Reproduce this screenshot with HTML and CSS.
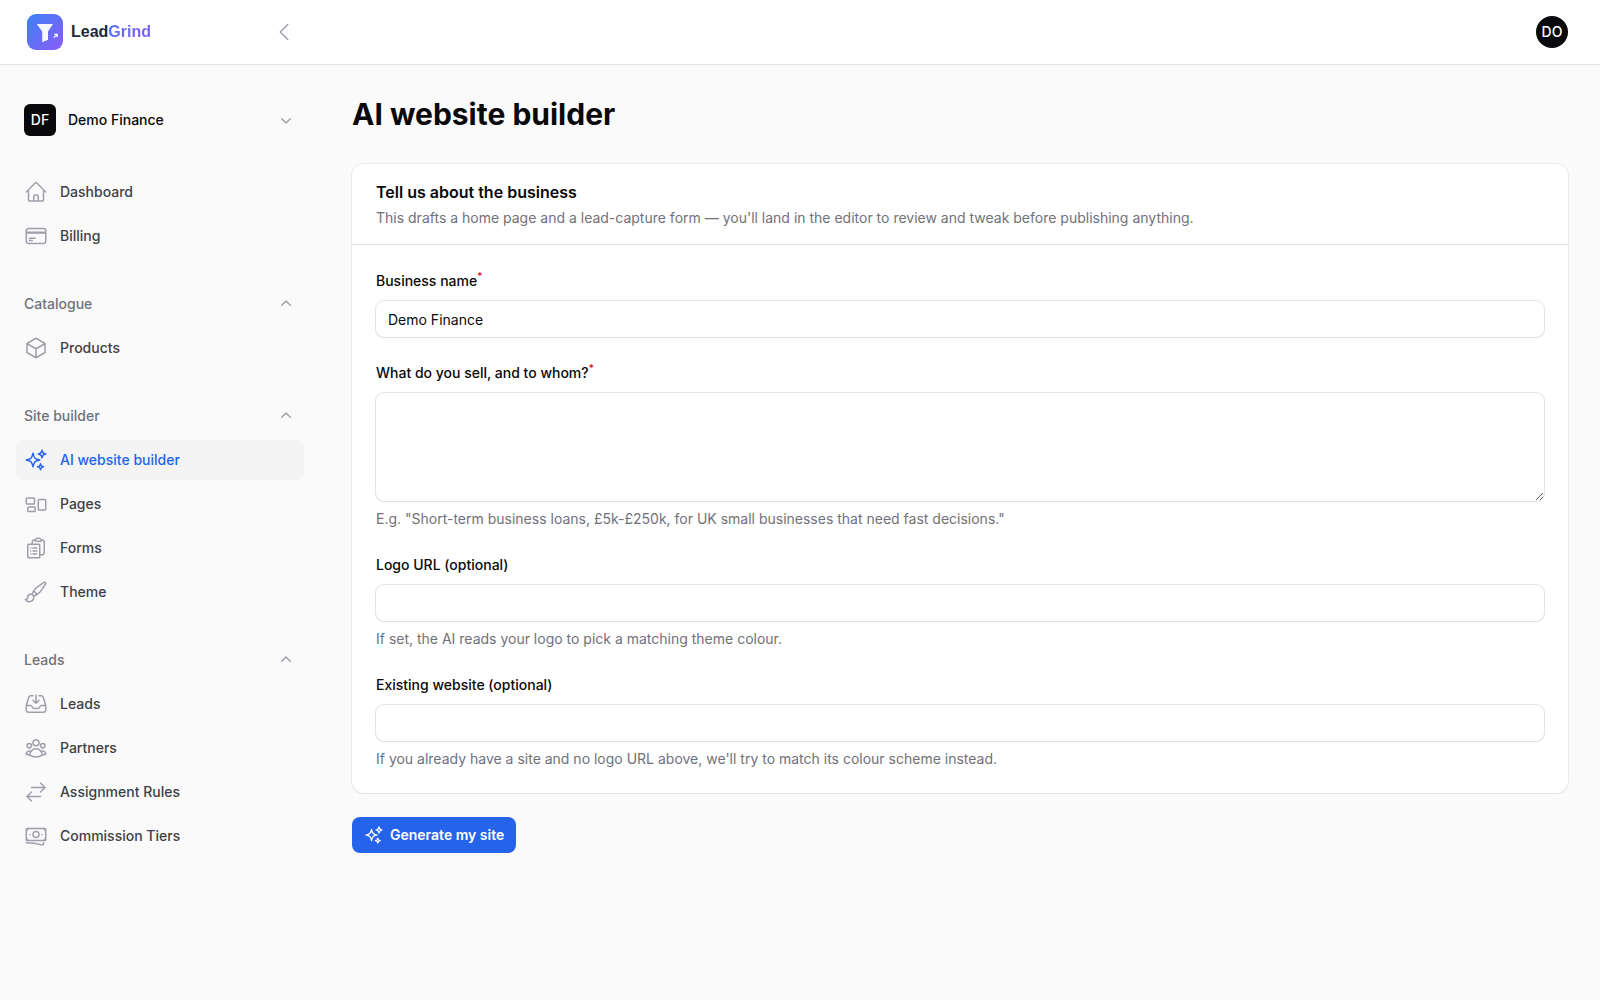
FILE: index.html
```html
<!DOCTYPE html>
<html lang="en">
<head>
    <meta charset="UTF-8">
    <meta name="viewport" content="width=device-width, initial-scale=1.0">
    <title>AI website builder - LeadGrind</title>
    <link rel="stylesheet" href="styles.css">
</head>
<body>
    <!-- Icon sprite -->
    <svg class="sprite" aria-hidden="true">
        <symbol id="home" viewBox="0 0 24 24"><path d="m2.25 12 8.954-8.955c.44-.439 1.152-.439 1.591 0L21.75 12M4.5 9.75v10.125c0 .621.504 1.125 1.125 1.125H9.75v-4.875c0-.621.504-1.125 1.125-1.125h2.25c.621 0 1.125.504 1.125 1.125V21h4.125c.621 0 1.125-.504 1.125-1.125V9.75M8.25 21h8.25"/></symbol>
        <symbol id="card" viewBox="0 0 24 24"><path d="M2.25 8.25h19.5M2.25 9h19.5m-16.5 5.25h6m-6 2.25h3m-3.75 3h15a2.25 2.25 0 0 0 2.25-2.25V6.75A2.25 2.25 0 0 0 19.5 4.5h-15a2.25 2.25 0 0 0-2.25 2.25v10.5A2.25 2.25 0 0 0 4.5 19.5Z"/></symbol>
        <symbol id="cube" viewBox="0 0 24 24"><path d="m21 7.5-9-5.25L3 7.5m18 0-9 5.25m9-5.25v9l-9 5.25M3 7.5l9 5.25M3 7.5v9l9 5.25m0-9v9"/></symbol>
        <symbol id="sparkles" viewBox="0 0 24 24"><path d="M9.813 15.904 9 18.75l-.813-2.846a4.5 4.5 0 0 0-3.09-3.09L2.25 12l2.846-.813a4.5 4.5 0 0 0 3.09-3.09L9 5.25l.813 2.846a4.5 4.5 0 0 0 3.09 3.09L15.75 12l-2.846.813a4.5 4.5 0 0 0-3.09 3.09ZM18.259 8.715 18 9.75l-.259-1.035a3.375 3.375 0 0 0-2.455-2.456L14.25 6l1.036-.259a3.375 3.375 0 0 0 2.455-2.456L18 2.25l.259 1.035a3.375 3.375 0 0 0 2.456 2.456L21.75 6l-1.035.259a3.375 3.375 0 0 0-2.456 2.456ZM16.894 20.567 16.5 21.75l-.394-1.183a2.25 2.25 0 0 0-1.423-1.423L13.5 18.75l1.183-.394a2.25 2.25 0 0 0 1.423-1.423l.394-1.183.394 1.183a2.25 2.25 0 0 0 1.423 1.423l1.183.394-1.183.394a2.25 2.25 0 0 0-1.423 1.423Z"/></symbol>
        <symbol id="pages" viewBox="0 0 24 24"><path d="M2.25 7.125C2.25 6.504 2.754 6 3.375 6h6c.621 0 1.125.504 1.125 1.125v3.75c0 .621-.504 1.125-1.125 1.125h-6a1.125 1.125 0 0 1-1.125-1.125v-3.75ZM14.25 8.625c0-.621.504-1.125 1.125-1.125h5.25c.621 0 1.125.504 1.125 1.125v8.25c0 .621-.504 1.125-1.125 1.125h-5.25a1.125 1.125 0 0 1-1.125-1.125v-8.25ZM3.75 16.125c0-.621.504-1.125 1.125-1.125h5.25c.621 0 1.125.504 1.125 1.125v2.25c0 .621-.504 1.125-1.125 1.125h-5.25a1.125 1.125 0 0 1-1.125-1.125v-2.25Z"/></symbol>
        <symbol id="forms" viewBox="0 0 24 24"><path d="M9 12h3.75M9 15h3.75M9 18h3.75m3 .75H18a2.25 2.25 0 0 0 2.25-2.25V6.108c0-1.135-.845-2.098-1.976-2.192a48.424 48.424 0 0 0-1.123-.08m-5.801 0c-.065.21-.1.433-.1.664 0 .414.336.75.75.75h4.5a.75.75 0 0 0 .75-.75 2.25 2.25 0 0 0-.1-.664m-5.8 0A2.251 2.251 0 0 1 13.5 2.25H15c1.012 0 1.867.668 2.15 1.586m-5.8 0c-.376.023-.75.05-1.124.08C9.095 4.01 8.25 4.973 8.25 6.108V8.25m0 0H4.875c-.621 0-1.125.504-1.125 1.125v11.25c0 .621.504 1.125 1.125 1.125h9.75c.621 0 1.125-.504 1.125-1.125V9.375c0-.621-.504-1.125-1.125-1.125H8.25ZM6.75 12h.008v.008H6.75V12Zm0 3h.008v.008H6.75V15Zm0 3h.008v.008H6.75V18Z"/></symbol>
        <symbol id="brush" viewBox="0 0 24 24"><path d="M9.53 16.122a3 3 0 0 0-5.78 1.128 2.25 2.25 0 0 1-2.4 2.245 4.5 4.5 0 0 0 8.4-2.245c0-.399-.078-.78-.22-1.128Zm0 0a15.998 15.998 0 0 0 3.388-1.62m-5.043-.025a15.994 15.994 0 0 1 1.622-3.395m3.42 3.42a15.995 15.995 0 0 0 4.764-4.648l3.876-5.814a1.151 1.151 0 0 0-1.597-1.597L14.146 6.32a15.996 15.996 0 0 0-4.649 4.763m3.42 3.42a6.776 6.776 0 0 0-3.42-3.42"/></symbol>
        <symbol id="inbox" viewBox="0 0 24 24"><path d="M9 3.75H6.912a2.25 2.25 0 0 0-2.15 1.588L2.35 13.177a2.25 2.25 0 0 0-.1.661V18a2.25 2.25 0 0 0 2.25 2.25h15A2.25 2.25 0 0 0 21.75 18v-4.162c0-.224-.034-.447-.1-.661L19.24 5.338a2.25 2.25 0 0 0-2.15-1.588H15M2.25 13.5h3.86a2.25 2.25 0 0 1 2.012 1.244l.256.512a2.25 2.25 0 0 0 2.013 1.244h3.218a2.25 2.25 0 0 0 2.013-1.244l.256-.512a2.25 2.25 0 0 1 2.013-1.244h3.859M12 3v8.25m0 0-3-3m3 3 3-3"/></symbol>
        <symbol id="group" viewBox="0 0 24 24"><path d="M18 18.72a9.094 9.094 0 0 0 3.741-.479 3 3 0 0 0-4.682-2.72m.94 3.198.001.031c0 .225-.012.447-.037.666A11.944 11.944 0 0 1 12 21c-2.17 0-4.207-.576-5.963-1.584A6.062 6.062 0 0 1 6 18.719m12 0a5.971 5.971 0 0 0-.941-3.197m0 0A5.995 5.995 0 0 0 12 12.75a5.995 5.995 0 0 0-5.058 2.772m0 0a3 3 0 0 0-4.681 2.72 8.986 8.986 0 0 0 3.74.477m.94-3.197a5.971 5.971 0 0 0-.94 3.197M15 6.75a3 3 0 1 1-6 0 3 3 0 0 1 6 0Zm6 3a2.25 2.25 0 1 1-4.5 0 2.25 2.25 0 0 1 4.5 0Zm-13.5 0a2.25 2.25 0 1 1-4.5 0 2.25 2.25 0 0 1 4.5 0Z"/></symbol>
        <symbol id="arrows" viewBox="0 0 24 24"><path d="M7.5 21 3 16.5m0 0L7.5 12M3 16.5h13.5m0-13.5L21 7.5m0 0L16.5 12M21 7.5H7.5"/></symbol>
        <symbol id="banknotes" viewBox="0 0 24 24"><path d="M2.25 18.75a60.07 60.07 0 0 1 15.797 2.101c.727.198 1.453-.342 1.453-1.096V18.75M3.75 4.5v.75A.75.75 0 0 1 3 6h-.75m0 0v-.375c0-.621.504-1.125 1.125-1.125H20.25M2.25 6v9m18-10.5v.75c0 .414.336.75.75.75h.75m-1.5-1.5h.375c.621 0 1.125.504 1.125 1.125v9.75c0 .621-.504 1.125-1.125 1.125h-.375m1.5-1.5H21a.75.75 0 0 0-.75.75v.75m0 0H3.75m0 0h-.375a1.125 1.125 0 0 1-1.125-1.125V15m1.5 1.5v-.75A.75.75 0 0 0 3 15h-.75M15 10.5a3 3 0 1 1-6 0 3 3 0 0 1 6 0Zm3 0h.008v.008H18V10.5Zm-12 0h.008v.008H6V10.5Z"/></symbol>
        <symbol id="chevron-left" viewBox="0 0 24 24"><path d="M15.75 19.5 8.25 12l7.5-7.5"/></symbol>
        <symbol id="chevron-down" viewBox="0 0 20 20"><path d="M5.22 8.22a.75.75 0 0 1 1.06 0L10 11.94l3.72-3.72a.75.75 0 1 1 1.06 1.06l-4.25 4.25a.75.75 0 0 1-1.06 0L5.22 9.28a.75.75 0 0 1 0-1.06Z"/></symbol>
        <symbol id="chevron-up" viewBox="0 0 20 20"><path d="M9.47 6.47a.75.75 0 0 1 1.06 0l4.25 4.25a.75.75 0 1 1-1.06 1.06L10 8.06l-3.72 3.72a.75.75 0 0 1-1.06-1.06l4.25-4.25Z"/></symbol>
    </svg>

    <header class="topbar">
        <div class="topbar-start">
            <a class="brand" href="#">
                <svg class="brand-mark" viewBox="0 0 36 36" aria-hidden="true">
                    <defs>
                        <linearGradient id="brand-gradient" x1="0" y1="0" x2="1" y2="1">
                            <stop offset="0" stop-color="#3b82f6"/>
                            <stop offset="1" stop-color="#8b5cf6"/>
                        </linearGradient>
                    </defs>
                    <rect width="36" height="36" rx="9" fill="url(#brand-gradient)"/>
                    <path d="M9.700 10h16.300l-5 7.500v8.200l-5.800 2.500V17.500z" fill="#fff" fill-opacity=".95"/>
                    <path d="M26.800 23.700l3.400-3.400M27.200 20.300h3v3" fill="none" stroke="#fff" stroke-width="1.200"/>
                </svg>
                <span class="brand-name">Lead<span class="brand-accent">Grind</span></span>
            </a>
            <button class="icon-button" type="button" aria-label="Collapse sidebar">
                <svg class="icon"><use href="#chevron-left"/></svg>
            </button>
        </div>
        <button class="avatar avatar-round" type="button" aria-label="User menu">DO</button>
    </header>

    <div class="layout">
        <aside class="sidebar">
            <button class="tenant" type="button">
                <span class="avatar">DF</span>
                <span class="tenant-name">Demo Finance</span>
                <svg class="icon-small"><use href="#chevron-down"/></svg>
            </button>

            <nav class="nav">
                <ul class="nav-items">
                    <li><a class="nav-item" href="#"><svg class="icon"><use href="#home"/></svg>Dashboard</a></li>
                    <li><a class="nav-item" href="#"><svg class="icon"><use href="#card"/></svg>Billing</a></li>
                </ul>

                <div class="nav-group">
                    <button class="nav-label" type="button">Catalogue<svg class="icon-small"><use href="#chevron-up"/></svg></button>
                    <ul class="nav-items">
                        <li><a class="nav-item" href="#"><svg class="icon"><use href="#cube"/></svg>Products</a></li>
                    </ul>
                </div>

                <div class="nav-group">
                    <button class="nav-label" type="button">Site builder<svg class="icon-small"><use href="#chevron-up"/></svg></button>
                    <ul class="nav-items">
                        <li><a class="nav-item active" href="#" aria-current="page"><svg class="icon"><use href="#sparkles"/></svg>AI website builder</a></li>
                        <li><a class="nav-item" href="#"><svg class="icon"><use href="#pages"/></svg>Pages</a></li>
                        <li><a class="nav-item" href="#"><svg class="icon"><use href="#forms"/></svg>Forms</a></li>
                        <li><a class="nav-item" href="#"><svg class="icon"><use href="#brush"/></svg>Theme</a></li>
                    </ul>
                </div>

                <div class="nav-group">
                    <button class="nav-label" type="button">Leads<svg class="icon-small"><use href="#chevron-up"/></svg></button>
                    <ul class="nav-items">
                        <li><a class="nav-item" href="#"><svg class="icon"><use href="#inbox"/></svg>Leads</a></li>
                        <li><a class="nav-item" href="#"><svg class="icon"><use href="#group"/></svg>Partners</a></li>
                        <li><a class="nav-item" href="#"><svg class="icon"><use href="#arrows"/></svg>Assignment Rules</a></li>
                        <li><a class="nav-item" href="#"><svg class="icon"><use href="#banknotes"/></svg>Commission Tiers</a></li>
                    </ul>
                </div>
            </nav>
        </aside>

        <main class="main">
            <h1>AI website builder</h1>

            <form class="form">
                <section class="card">
                    <header class="card-header">
                        <h2>Tell us about the business</h2>
                        <p>This drafts a home page and a lead-capture form — you'll land in the editor to review and tweak before publishing anything.</p>
                    </header>
                    <div class="card-body">
                        <div class="field">
                            <label for="businessName">Business name<sup>*</sup></label>
                            <input type="text" id="businessName" value="Demo Finance" required>
                        </div>
                        <div class="field">
                            <label for="description">What do you sell, and to whom?<sup>*</sup></label>
                            <textarea id="description" rows="4" required></textarea>
                            <p class="hint">E.g. "Short-term business loans, £5k-£250k, for UK small businesses that need fast decisions."</p>
                        </div>
                        <div class="field">
                            <label for="logoUrl">Logo URL (optional)</label>
                            <input type="url" id="logoUrl">
                            <p class="hint">If set, the AI reads your logo to pick a matching theme colour.</p>
                        </div>
                        <div class="field">
                            <label for="website">Existing website (optional)</label>
                            <input type="url" id="website">
                            <p class="hint">If you already have a site and no logo URL above, we'll try to match its colour scheme instead.</p>
                        </div>
                    </div>
                </section>

                <button class="submit" type="submit"><svg class="icon"><use href="#sparkles"/></svg>Generate my site</button>
            </form>
        </main>
    </div>
</body>
</html>
```

FILE: styles.css
```css
* {
    box-sizing: border-box;
}
body {
    margin: 0;
    background: #fafafa;
    color: #09090b;
    font-family: Inter, sans-serif;
    font-size: 14px;
    line-height: 20px;
}
h1, h2, p, ul {
    margin: 0;
    padding: 0;
}
ul {
    list-style: none;
}
a {
    color: inherit;
    text-decoration: none;
}
button, input, textarea {
    font: inherit;
    color: inherit;
}
button {
    border: 0;
    padding: 0;
    background: none;
    cursor: pointer;
}
.sprite {
    display: none;
}
.icon {
    width: 24px;
    height: 24px;
    flex-shrink: 0;
    fill: none;
    stroke: #9f9fa9;
    stroke-width: 1.5;
    stroke-linecap: round;
    stroke-linejoin: round;
}
.icon-small {
    width: 20px;
    height: 20px;
    flex-shrink: 0;
    fill: #9f9fa9;
}

/* Top bar */
.topbar {
    display: flex;
    align-items: center;
    justify-content: space-between;
    height: 64px;
    padding: 0 32px 0 24px;
    background: #fff;
}
.topbar, .card {
    box-shadow: 0 0 0 1px rgba(9, 9, 11, 0.05), 0 1px 2px rgba(0, 0, 0, 0.05);
}
.topbar-start {
    display: flex;
    align-items: center;
    justify-content: space-between;
    width: 272px;
}
.brand {
    display: flex;
    align-items: center;
    gap: 8px;
    padding-left: 3px;
}
.brand-mark {
    width: 36px;
    height: 36px;
}
.brand-name {
    color: #1e293b;
    font-family: "Liberation Sans", Arial, sans-serif;
    font-size: 16px;
    font-weight: 700;
}
.brand-accent {
    background: linear-gradient(90deg, #5b6ef5, #7c5cf6);
    background-clip: text;
    -webkit-background-clip: text;
    color: transparent;
}
.icon-button {
    display: flex;
}
.avatar {
    display: flex;
    align-items: center;
    justify-content: center;
    width: 32px;
    height: 32px;
    border-radius: 6px;
    background: #09090b;
    color: #fff;
    font-weight: 500;
}
.avatar-round {
    border-radius: 50%;
}

/* Sidebar */
.layout {
    display: flex;
}
.sidebar {
    display: flex;
    flex-direction: column;
    gap: 28px;
    width: 320px;
    flex-shrink: 0;
    padding: 32px 16px;
}
.tenant {
    display: flex;
    align-items: center;
    gap: 12px;
    padding: 8px;
    font-weight: 500;
    text-align: left;
}
.tenant-name {
    flex: 1;
}
.nav {
    display: flex;
    flex-direction: column;
    gap: 28px;
}
.nav-group, .nav-items {
    display: flex;
    flex-direction: column;
    gap: 4px;
}
.nav-label {
    display: flex;
    align-items: center;
    justify-content: space-between;
    height: 40px;
    padding: 0 8px;
    color: #71717b;
    font-weight: 500;
}
.nav-item {
    display: flex;
    align-items: center;
    gap: 12px;
    padding: 8px;
    border-radius: 8px;
    color: #3f3f46;
    font-weight: 500;
}
.nav-item.active {
    background: #f4f4f5;
    color: #2563eb;
}
.nav-item.active .icon {
    stroke: #2563eb;
}

/* Page */
.main {
    flex: 1;
    min-width: 0;
    padding: 32px;
}
h1 {
    font-size: 30px;
    line-height: 36px;
    font-weight: 700;
}
.form {
    display: flex;
    flex-direction: column;
    align-items: flex-start;
    gap: 24px;
    margin-top: 32px;
}
.card {
    width: 100%;
    border-radius: 12px;
    background: #fff;
}
.card-header {
    padding: 16px 24px;
    border-bottom: 1px solid #e4e4e7;
}
h2 {
    margin-bottom: 4px;
    font-size: 16px;
    line-height: 24px;
    font-weight: 600;
}
.card-header p, .hint {
    color: #71717b;
}
.card-body {
    display: flex;
    flex-direction: column;
    gap: 24px;
    padding: 24px;
}
.field {
    display: flex;
    flex-direction: column;
    gap: 8px;
}
label {
    line-height: 24px;
    font-weight: 500;
}
sup {
    color: #e7000b;
    font-size: 10px;
    font-weight: 500;
    line-height: 0;
}
input, textarea {
    display: block;
    width: 100%;
    height: 36px;
    padding: 6px 12px;
    border: 0;
    border-radius: 8px;
    background: #fff;
    outline: none;
    line-height: 24px;
    box-shadow: 0 0 0 1px rgba(9, 9, 11, 0.1), 0 1px 2px rgba(0, 0, 0, 0.05);
}
textarea {
    height: 108px;
    resize: vertical;
}
.submit {
    display: flex;
    align-items: center;
    gap: 6px;
    padding: 8px 12px;
    border-radius: 8px;
    background: #2563eb;
    color: #fff;
    font-weight: 600;
}
.submit .icon {
    width: 20px;
    height: 20px;
    stroke: #fff;
}
```
